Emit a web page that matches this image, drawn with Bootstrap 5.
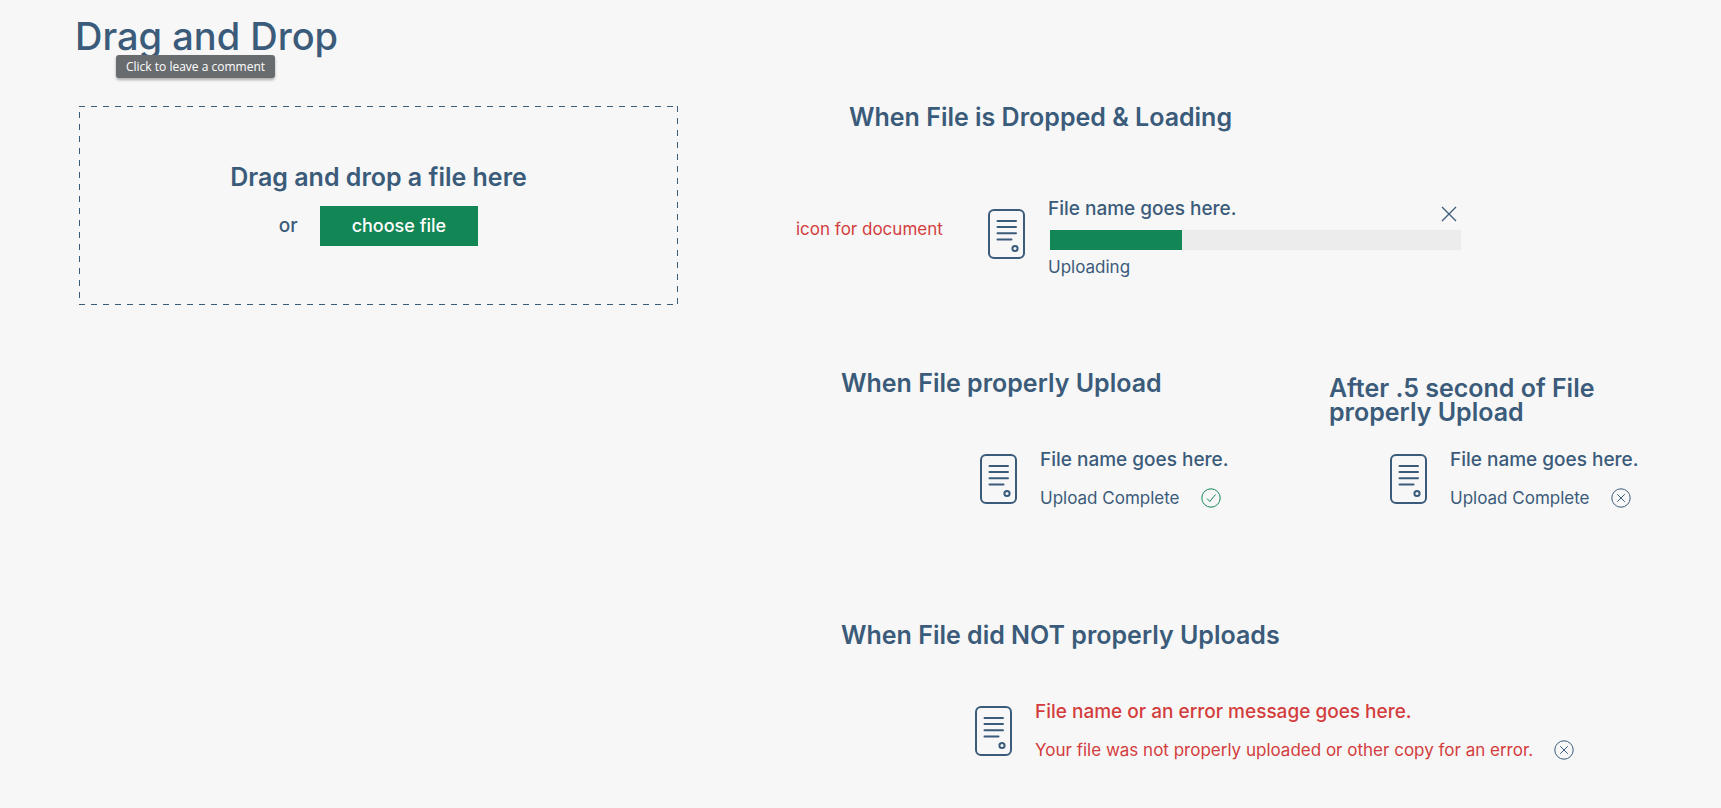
<!DOCTYPE html>
<html lang="en">
<head>
<meta charset="utf-8">
<meta name="viewport" content="width=device-width, initial-scale=1">
<title>Drag and Drop</title>
<link href="https://cdn.jsdelivr.net/npm/bootstrap@5.3.0/dist/css/bootstrap.min.css" rel="stylesheet">
<style>
  :root { --ink: #3b5b7a; --go: #138656; --stop: #d33d3d; }
  body { background: #f7f7f7; color: var(--ink); font-family: Inter, "Liberation Sans", sans-serif; font-size: 17px; line-height: 24px; font-weight: 400; }
  .page { padding: 14px 79px 24px 75px; }
  .page-title { font-size: 38px; line-height: 44px; font-weight: 500; }
  .hint { left: 41px; top: 41px; padding: 0 10px; height: 23px; border-radius: 3px; background: #696c6f; color: #fff; font: 12px/23px "Open Sans", sans-serif; box-shadow: 0 2px 3px rgba(0,0,0,.3); white-space: nowrap; }
  .board { display: grid; grid-template-columns: 599fr 846fr; column-gap: 118px; margin: 47px 0 0 4px; }
  .dropzone { height: 199px; margin-top: 1px; padding-top: 59px;
    --h: repeating-linear-gradient(90deg, var(--ink) 0 6px, transparent 6px 12px);
    --l: repeating-linear-gradient(180deg, transparent 0 6px, var(--ink) 6px 12px);
    --r: repeating-linear-gradient(180deg, var(--ink) 0 6px, transparent 6px 12px);
    background: var(--h) top/100% 1px no-repeat, var(--h) bottom/100% 1px no-repeat, var(--l) left/1px 100% no-repeat, var(--r) right/1px 100% no-repeat; }
  .state-title { font-size: 25px; line-height: 24px; font-weight: 600; margin: 0; }
  .or-line { font-size: 19px; font-weight: 500; margin-top: 17px; gap: 22px; }
  .btn-choose { --bs-btn-color: #fff; --bs-btn-bg: var(--go); --bs-btn-hover-color: #fff; --bs-btn-hover-bg: #0f7049; --bs-btn-border-width: 0; --bs-btn-border-radius: 0; --bs-btn-font-size: 18px; --bs-btn-font-weight: 500; --bs-btn-line-height: 24px; --bs-btn-padding-y: 8px; --bs-btn-padding-x: 32px; }
  .loading { padding-left: 53px; }
  .loading-row { margin-top: 68px; }
  .note { width: 192px; padding-top: 20px; }
  .red { color: var(--stop); }
  .doc { width: 37px; height: 50px; margin-top: 6px; flex: none; }
  .loading-row .doc { margin-top: 12px; }
  .file-info { margin-left: 23px; }
  .file-name { font-size: 19px; font-weight: 500; }
  .upload { width: 413px; }
  .upload .progress { --bs-progress-height: 20px; --bs-progress-bg: #ececec; --bs-progress-border-radius: 0; --bs-progress-bar-bg: var(--go); margin: 8px 0 5px 2px; }
  .icon-btn { border: 0; padding: 0; background: none; color: var(--ink); line-height: 0; }
  .cancel { margin: 9px 4px 0 0; }
  .done { margin-top: 92px; display: grid; grid-template-columns: 488fr 313fr; padding-left: 45px; }
  .failed { margin-top: 113px; padding-left: 45px; }
  .head-box { min-height: 77px; }
  .later { padding-top: 5px; }
  .in-done { padding-left: 139px; }
  .in-later { padding-left: 61px; }
  .in-failed { padding-left: 134px; }
  .status { gap: 21px; margin-top: 14px; }
</style>
</head>
<body>
<svg class="d-none" xmlns="http://www.w3.org/2000/svg">
  <symbol id="i-doc" viewBox="0 0 37 50">
    <g fill="none" stroke="currentColor" stroke-width="2" stroke-linecap="round">
      <rect x="1" y="1" width="35" height="48" rx="5"/>
      <path d="M9.500 12H28M9.500 18H28M9.500 24.300H28M9.500 30.500H23.500"/>
      <circle cx="27" cy="39.500" r="2.600"/>
    </g>
  </symbol>
  <symbol id="i-x" viewBox="0 0 16 16"><path d="M1 1l14 14M15 1L1 15" fill="none" stroke="currentColor" stroke-width="1.300"/></symbol>
  <symbol id="i-check" viewBox="0 0 20 20"><g fill="none" stroke="currentColor"><circle cx="10" cy="10" r="9.200"/><path d="M6 10.500l2.800 3L14.500 6.500"/></g></symbol>
  <symbol id="i-close" viewBox="0 0 20 20"><g fill="none" stroke="currentColor"><circle cx="10" cy="10" r="9.200"/><path d="M6.200 6.200l7.600 7.600M13.800 6.200l-7.600 7.600"/></g></symbol>
</svg>
<main class="page">
  <header class="position-relative">
    <h1 class="page-title mb-0">Drag and Drop</h1>
    <div class="hint position-absolute" role="tooltip">Click to leave a comment</div>
  </header>
  <div class="board">
    <div>
      <section class="dropzone text-center">
        <h2 class="state-title">Drag and drop a file here</h2>
        <div class="or-line d-flex justify-content-center align-items-center">
          <span>or</span>
          <button type="button" class="btn btn-choose">choose file</button>
        </div>
      </section>
    </div>
    <div>
      <section>
        <h2 class="state-title loading">When File is Dropped &amp; Loading</h2>
        <div class="loading-row d-flex align-items-start">
          <div class="note red">icon for document</div>
          <svg class="doc" aria-hidden="true"><use href="#i-doc"/></svg>
          <div class="file-info upload">
            <div class="d-flex justify-content-between align-items-start">
              <div class="file-name">File name goes here.</div>
              <button type="button" class="icon-btn cancel" aria-label="Cancel upload"><svg width="16" height="16"><use href="#i-x"/></svg></button>
            </div>
            <div class="progress" role="progressbar" aria-label="Upload progress" aria-valuenow="32" aria-valuemin="0" aria-valuemax="100"><div class="progress-bar" style="width:32%"></div></div>
            <div>Uploading</div>
          </div>
        </div>
      </section>
      <section class="done">
        <div>
          <div class="head-box"><h2 class="state-title">When File properly Upload</h2></div>
          <div class="in-done d-flex align-items-start">
            <svg class="doc" aria-hidden="true"><use href="#i-doc"/></svg>
            <div class="file-info">
              <div class="file-name">File name goes here.</div>
              <div class="status d-flex align-items-center"><span>Upload Complete</span>
                <svg width="20" height="20" style="color:var(--go)" role="img" aria-label="Done"><use href="#i-check"/></svg></div>
            </div>
          </div>
        </div>
        <div>
          <div class="head-box later"><h2 class="state-title">After .5 second of File properly Upload</h2></div>
          <div class="in-later d-flex align-items-start">
            <svg class="doc" aria-hidden="true"><use href="#i-doc"/></svg>
            <div class="file-info">
              <div class="file-name">File name goes here.</div>
              <div class="status d-flex align-items-center"><span>Upload Complete</span>
                <button type="button" class="icon-btn" aria-label="Remove file"><svg width="20" height="20"><use href="#i-close"/></svg></button></div>
            </div>
          </div>
        </div>
      </section>
      <section class="failed">
        <div class="head-box"><h2 class="state-title">When File did NOT properly Uploads</h2></div>
        <div class="in-failed d-flex align-items-start">
          <svg class="doc" aria-hidden="true"><use href="#i-doc"/></svg>
          <div class="file-info">
            <div class="file-name red">File name or an error message goes here.</div>
            <div class="status d-flex align-items-center"><span class="red">Your file was not properly uploaded or other copy for an error.</span>
              <button type="button" class="icon-btn" aria-label="Dismiss error"><svg width="20" height="20"><use href="#i-close"/></svg></button></div>
          </div>
        </div>
      </section>
    </div>
  </div>
</main>
<script src="https://cdn.jsdelivr.net/npm/bootstrap@5.3.0/dist/js/bootstrap.bundle.min.js"></script>
</body>
</html>
